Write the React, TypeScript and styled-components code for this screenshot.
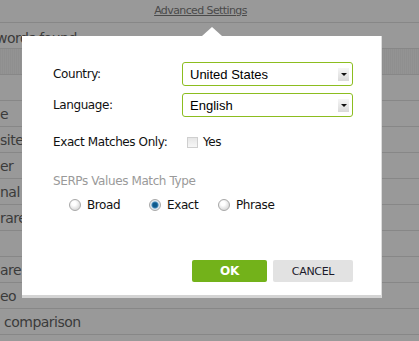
import React from 'react'
import styled, { createGlobalStyle } from 'styled-components'

const GlobalStyle = createGlobalStyle`
  html, body { margin: 0; padding: 0; }
  body {
    width: 419px;
    height: 341px;
    overflow: hidden;
    background: #999999;
    font-family: "DejaVu Sans", Verdana, sans-serif;
  }
`

const Page = styled.div`
  position: relative;
  width: 419px;
  height: 341px;
  overflow: hidden;
  background: #999999;
`

const TopBar = styled.div`
  height: 22px;
  border-bottom: 1px solid #878787;
  display: flex;
  justify-content: center;
  align-items: center;
  padding-right: 18px;
`

const SettingsLink = styled.a`
  font-size: 11px;
  letter-spacing: -0.6px;
  color: #4a4a4a;
  text-decoration: underline;
  margin-top: -1px;
`

const Row = styled.div<{ $band?: boolean }>`
  height: 25px;
  border-bottom: 1px solid #878787;
  display: flex;
  align-items: center;
  font-size: 14px;
  letter-spacing: -0.5px;
  color: #3b3b3b;
  white-space: nowrap;
  background: ${(p) =>
    p.$band
      ? 'repeating-linear-gradient(90deg, #8f8f8f 0 1px, #939393 1px 2px)'
      : 'transparent'};
`

const RowText = styled.span<{ $indent?: number }>`
  padding-left: ${(p) => p.$indent ?? 0}px;
`

const HeaderText = styled.span`
  margin-left: -4px;
  margin-top: 4px;
  font-size: 14px;
`

const Dialog = styled.div`
  position: absolute;
  left: 22px;
  top: 36px;
  width: 359px;
  height: 259px;
  background: #ffffff;
  border-right: 1px solid #dcdcdc;
  border-bottom: 3px solid #d4d4d4;
  box-sizing: content-box;
  display: flex;
  flex-direction: column;

  &::before {
    content: '';
    position: absolute;
    left: 180px;
    top: -9px;
    border-left: 10px solid transparent;
    border-right: 10px solid transparent;
    border-bottom: 9px solid #ffffff;
  }
`

const Form = styled.div`
  display: flex;
  flex-direction: column;
  padding: 26px 28px 0 31px;
  font-size: 12px;
  letter-spacing: -0.4px;
  color: #111111;
`

const FieldRow = styled.div<{ $mt?: number }>`
  display: grid;
  grid-template-columns: 129px 1fr;
  align-items: center;
  margin-top: ${(p) => p.$mt ?? 0}px;
`

const Label = styled.label`
  line-height: 16px;
`

const SelectBox = styled.div`
  height: 22px;
  border: 1px solid #8cbd1f;
  border-radius: 3px;
  display: flex;
  align-items: center;
  justify-content: space-between;
  padding: 0 3px 0 7px;
  font-family: "Liberation Sans", Arial, sans-serif;
  font-size: 13px;
  letter-spacing: 0;
  color: #000000;
`

const SelectArrow = styled.span`
  width: 11px;
  height: 13px;
  background: linear-gradient(#f6f6f6, #d9d9d9);
  display: flex;
  align-items: center;
  justify-content: center;

  &::after {
    content: '';
    border-left: 3px solid transparent;
    border-right: 3px solid transparent;
    border-top: 3px solid #111111;
  }
`

const CheckWrap = styled.span`
  display: flex;
  align-items: center;
  gap: 5px;
  padding-left: 5px;
`

const CheckBox = styled.span`
  width: 9px;
  height: 9px;
  border: 1px solid #cfcfcf;
  background: linear-gradient(#e6e6e6, #f7f7f7);
`

const SectionTitle = styled.div`
  margin-top: 23px;
  color: #9a9a9a;
  line-height: 16px;
`

const RadioRow = styled.div`
  display: flex;
  align-items: center;
  padding-left: 16px;
  margin-top: 9px;
`

const RadioOption = styled.span<{ $w?: number }>`
  display: flex;
  align-items: center;
  gap: 6px;
  width: ${(p) => (p.$w ? `${p.$w}px` : 'auto')};
`

const RadioDot = styled.span<{ $on?: boolean }>`
  width: 10px;
  height: 10px;
  border-radius: 50%;
  border: 1px solid #a8a8a8;
  background: ${(p) =>
    p.$on
      ? 'radial-gradient(circle, #0e5a8c 0 2px, #3e86b8 3px, #dfe8ee 4px)'
      : 'radial-gradient(circle at 40% 35%, #ffffff 0 2px, #dedede 6px)'};
`

const Actions = styled.div`
  margin-top: auto;
  margin-bottom: 13px;
  display: flex;
  justify-content: flex-end;
  gap: 6px;
  padding-right: 28px;
`

const Button = styled.button<{ $primary?: boolean }>`
  width: ${(p) => (p.$primary ? 75 : 80)}px;
  height: 22px;
  border: none;
  border-radius: 2px;
  padding: 0;
  font-family: "DejaVu Sans", Verdana, sans-serif;
  font-size: ${(p) => (p.$primary ? 12 : 11)}px;
  font-weight: ${(p) => (p.$primary ? 700 : 400)};
  letter-spacing: -0.3px;
  color: ${(p) => (p.$primary ? '#ffffff' : '#1a1a2a')};
  background: ${(p) => (p.$primary ? '#73b21a' : '#e2e2e2')};
`

const ROWS = ['', 'e', 'site', 'er', 'nal', 'rare', '', 'are', 'eo', 'comparison']

export default function App() {
  return (
    <Page>
      <GlobalStyle />
      <TopBar>
        <SettingsLink>Advanced Settings</SettingsLink>
      </TopBar>
      <Row>
        <HeaderText>words found</HeaderText>
      </Row>
      <Row $band />
      {ROWS.map((t, i) => (
        <Row key={i}>
          <RowText $indent={t === 'comparison' ? 4 : 0}>{t}</RowText>
        </Row>
      ))}

      <Dialog>
        <Form>
          <FieldRow>
            <Label>Country:</Label>
            <SelectBox>
              United States
              <SelectArrow />
            </SelectBox>
          </FieldRow>
          <FieldRow $mt={7}>
            <Label>Language:</Label>
            <SelectBox>
              English
              <SelectArrow />
            </SelectBox>
          </FieldRow>
          <FieldRow $mt={17}>
            <Label>Exact Matches Only:</Label>
            <CheckWrap>
              <CheckBox />
              Yes
            </CheckWrap>
          </FieldRow>
          <SectionTitle>SERPs Values Match Type</SectionTitle>
          <RadioRow>
            <RadioOption $w={80}>
              <RadioDot />
              Broad
            </RadioOption>
            <RadioOption $w={69}>
              <RadioDot $on />
              Exact
            </RadioOption>
            <RadioOption>
              <RadioDot />
              Phrase
            </RadioOption>
          </RadioRow>
        </Form>
        <Actions>
          <Button $primary>OK</Button>
          <Button>CANCEL</Button>
        </Actions>
      </Dialog>
    </Page>
  )
}
